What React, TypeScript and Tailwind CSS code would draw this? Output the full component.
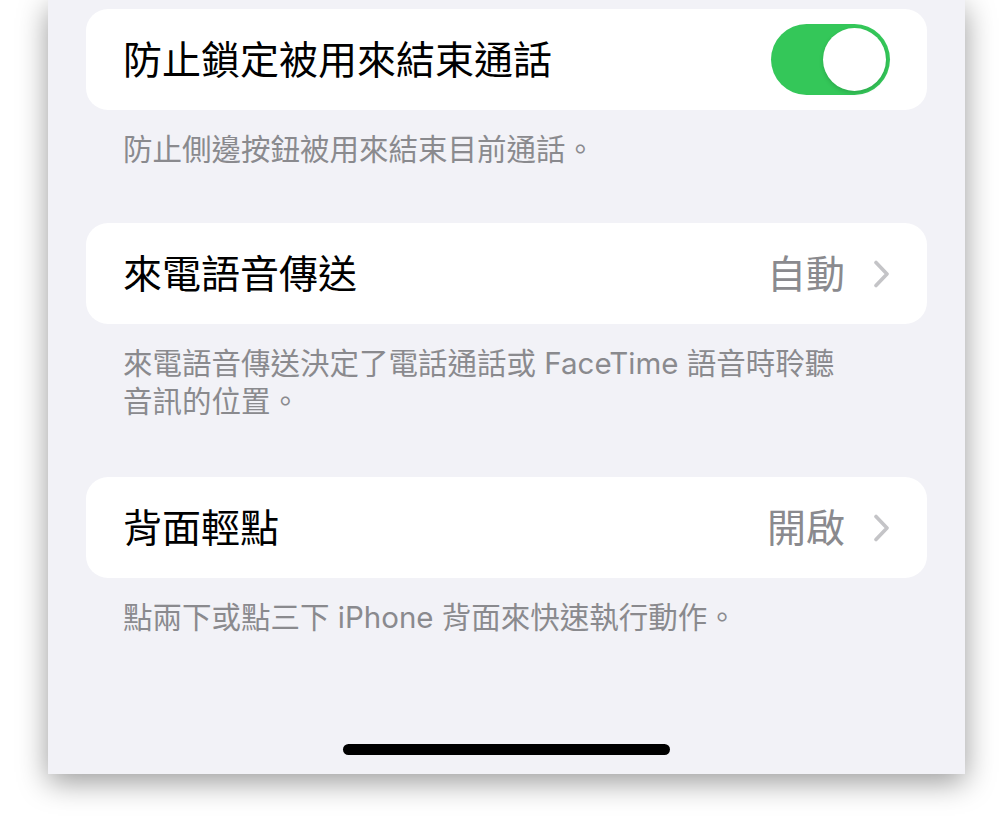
const font = '"Inter", "Noto Sans CJK TC", sans-serif';

function Chevron() {
  return (
    <svg width="17" height="28" viewBox="0 0 17 28" fill="none" className="ml-[28px]">
      <path d="M3 2.5 L14 14 L3 25.5" stroke="#c4c4c7" strokeWidth="3.6" strokeLinecap="round" strokeLinejoin="round" />
    </svg>
  );
}

function Toggle() {
  return (
    <div className="relative h-[71px] w-[119px] rounded-full bg-[#34c759]">
      <div className="absolute right-[4px] top-[4px] h-[63px] w-[63px] rounded-full bg-white shadow-[0_2px_4px_rgba(0,0,0,0.15)]" />
    </div>
  );
}

function Card({ label, right }: { label: string; right: React.ReactNode }) {
  return (
    <div className="flex h-[101px] items-center justify-between rounded-[22px] bg-white pl-[37px] pr-[37px]">
      <span className="text-[39px] leading-none text-black">{label}</span>
      {right}
    </div>
  );
}

function Value({ text }: { text: string }) {
  return (
    <div className="flex items-center">
      <span className="text-[39px] leading-none text-[#8a8a8e]">{text}</span>
      <Chevron />
    </div>
  );
}

function Footer({ children }: { children: React.ReactNode }) {
  return (
    <p className="mt-[20px] pl-[37px] text-[29.5px] leading-[38px] text-[#8a8a8e]">{children}</p>
  );
}

export default function App() {
  return (
    <div className="h-[823px] w-[999px] overflow-hidden bg-white" style={{ fontFamily: font }}>
      <div className="ml-[48px] flex h-[774px] w-[917px] flex-col bg-[#f2f2f7] px-[38px] pt-[9px] shadow-[0_8px_28px_rgba(0,0,0,0.4)]">
        <Card label="防止鎖定被用來結束通話" right={<Toggle />} />
        <Footer>防止側邊按鈕被用來結束目前通話。</Footer>

        <div className="mt-[55px]">
          <Card label="來電語音傳送" right={<Value text="自動" />} />
        </div>
        <Footer>
          來電語音傳送決定了電話通話或 FaceTime 語音時聆聽
          <br />
          音訊的位置。
        </Footer>

        <div className="mt-[57px]">
          <Card label="背面輕點" right={<Value text="開啟" />} />
        </div>
        <Footer>點兩下或點三下 iPhone 背面來快速執行動作。</Footer>

        <div className="mt-auto mb-[19px] flex justify-center">
          <div className="h-[11px] w-[327px] rounded-full bg-black" />
        </div>
      </div>
    </div>
  );
}
